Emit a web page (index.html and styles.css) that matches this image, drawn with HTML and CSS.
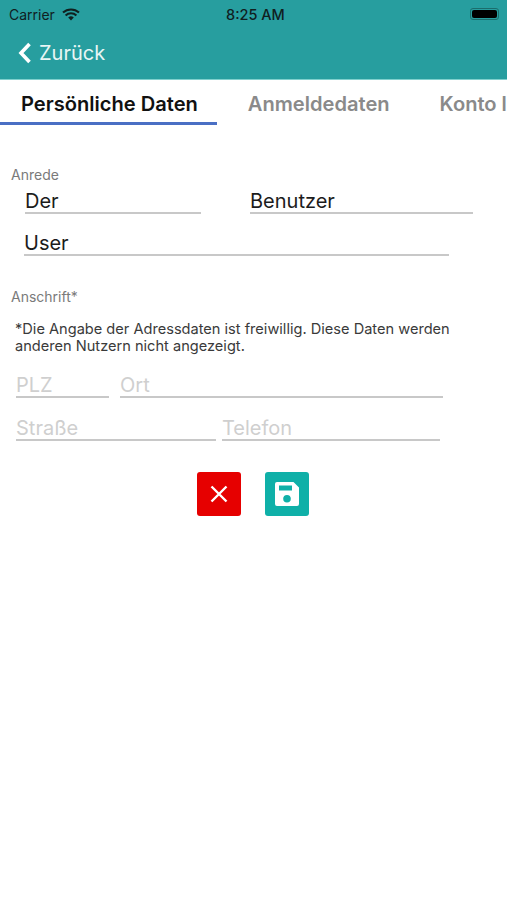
FILE: index.html
```html
<!DOCTYPE html>
<html lang="en">

<head>
    <meta charset="UTF-8">
    <meta name="viewport" content="width=device-width, initial-scale=1.0">
    <title>Persönliche Daten</title>
    <link rel="stylesheet" href="styles.css">
</head>

<body>
    <header class="top-bar">
        <div class="status-bar">
            <div class="status-left">
                <span>Carrier</span>
                <svg class="wifi" width="18" height="13" viewBox="0 0 18 13">
                    <path d="M9 12.6 6.2 9.4a4.2 4.2 0 0 1 5.6 0z" fill="#10201f" />
                    <path d="M1 4.6a11.8 11.8 0 0 1 16 0M3.6 7.4a8 8 0 0 1 10.8 0" fill="none" stroke="#10201f" stroke-width="2.1" />
                </svg>
            </div>
            <span class="status-time">8:25 AM</span>
            <div class="battery"><div class="battery-level"></div></div>
        </div>
        <div class="nav-bar">
            <svg class="back-icon" width="14" height="22" viewBox="0 0 14 22">
                <path d="M11.5 2 3 11l8.500 9" fill="none" stroke="#fff" stroke-width="3.6" />
            </svg>
            <span>Zurück</span>
        </div>
    </header>

    <nav class="tabs">
        <div class="tab active">Persönliche Daten</div>
        <div class="tab">Anmeldedaten</div>
        <div class="tab">Konto löschen</div>
    </nav>

    <main class="content">
        <div class="section-label">Anrede</div>
        <div class="row row-name">
            <div class="field field-first">Der</div>
            <div class="field field-last">Benutzer</div>
        </div>
        <div class="row row-user">
            <div class="field field-user">User</div>
        </div>

        <div class="section-label label-address">Anschrift*</div>
        <p class="note">*Die Angabe der Adressdaten ist freiwillig. Diese Daten werden anderen Nutzern nicht angezeigt.</p>
        <div class="row row-city">
            <div class="field empty field-plz">PLZ</div>
            <div class="field empty field-ort">Ort</div>
        </div>
        <div class="row row-street">
            <div class="field empty field-street">Straße</div>
            <div class="field empty field-phone">Telefon</div>
        </div>

        <div class="actions">
            <button class="btn btn-cancel">
                <svg width="22" height="22" viewBox="0 0 22 22">
                    <path d="M3.500 3.500 18.500 18.500M18.500 3.500 3.500 18.500" stroke="#fff" stroke-width="2.400" />
                </svg>
            </button>
            <button class="btn btn-save">
                <svg width="26" height="26" viewBox="0 0 26 26">
                    <path fill-rule="evenodd" fill="#fff" d="M3 1h16.500L25 6.500V23a2 2 0 0 1-2 2H3a2 2 0 0 1-2-2V3a2 2 0 0 1 2-2zM5 4.500v5h13v-5zM13 14a3.800 3.800 0 1 0 0 7.600A3.800 3.800 0 0 0 13 14z" />
                </svg>
            </button>
        </div>
    </main>
</body>

</html>
```

FILE: styles.css
```css
body {
    font-family: Inter, "Liberation Sans", sans-serif;
    margin: 0;
    padding: 0;
    background-color: #fff;
    overflow: hidden;
}

.top-bar {
    height: 79px;
    background-color: #279e9f;
    border-bottom: 1px solid #7fd0cd;
}

.status-bar {
    display: flex;
    justify-content: space-between;
    align-items: center;
    height: 28px;
    padding: 0 8px 0 9px;
    position: relative;
    font-size: 14px;
    color: #10201f;
}

.status-left {
    display: flex;
    align-items: center;
    gap: 7px;
}

.status-time {
    position: absolute;
    left: 226px;
    font-size: 14.500px;
    font-weight: 500;
}

.battery {
    width: 29px;
    height: 12px;
    border: 1px solid #1b6d6c;
    border-radius: 3px;
    padding: 1px;
    box-sizing: border-box;
}

.battery-level {
    height: 100%;
    background-color: #000;
    border-radius: 2px;
}

.nav-bar {
    display: flex;
    align-items: center;
    gap: 7px;
    height: 50px;
    padding-left: 18px;
    color: #e8f6f5;
    font-size: 20px;
}

.tabs {
    display: flex;
    height: 45px;
    box-sizing: border-box;
    white-space: nowrap;
    overflow: hidden;
    font-size: 20.100px;
    font-weight: 600;
    color: #8a8a8a;
}

.tab {
    padding-top: 12px;
    margin-right: 50px;
}

.tab.active {
    padding-left: 21px;
    padding-right: 19px;
    margin-right: 31px;
    color: #111;
    border-bottom: 3px solid #4a6fc4;
}

.content {
    padding: 42px 0 0 0;
}

.section-label {
    margin-left: 11px;
    font-size: 14px;
    line-height: 16px;
    color: #7a7a7a;
}

.row {
    display: flex;
}

.field {
    height: 26px;
    line-height: 31px;
    box-sizing: content-box;
    border-bottom: 2px solid #c8c8c8;
    font-size: 20px;
    color: #1c1c1c;
}

.field.empty {
    color: #cfcfcf;
}

.row-name {
    margin: 3px 0 0 25px;
    gap: 49px;
}

.field-first {
    width: 176px;
}

.field-last {
    width: 223px;
}

.row-user {
    margin: 14px 0 0 24px;
}

.field-user {
    width: 425px;
}

.label-address {
    margin-top: 33px;
}

.note {
    margin: 16px 0 0 15px;
    width: 450px;
    font-size: 14.600px;
    line-height: 17px;
    color: #3a3a3a;
}

.row-city {
    margin: 15px 0 0 16px;
    gap: 11px;
}

.field-plz {
    width: 93px;
}

.field-ort {
    width: 323px;
}

.row-street {
    margin: 15px 0 0 16px;
    gap: 6px;
}

.field-street {
    width: 200px;
}

.field-phone {
    width: 218px;
}

.actions {
    display: flex;
    margin: 31px 0 0 197px;
    gap: 24px;
}

.btn {
    display: flex;
    align-items: center;
    justify-content: center;
    width: 44px;
    height: 44px;
    border: none;
    border-radius: 3px;
    padding: 0;
}

.btn-cancel {
    background-color: #e60000;
}

.btn-save {
    background-color: #0fb0a8;
}
```
